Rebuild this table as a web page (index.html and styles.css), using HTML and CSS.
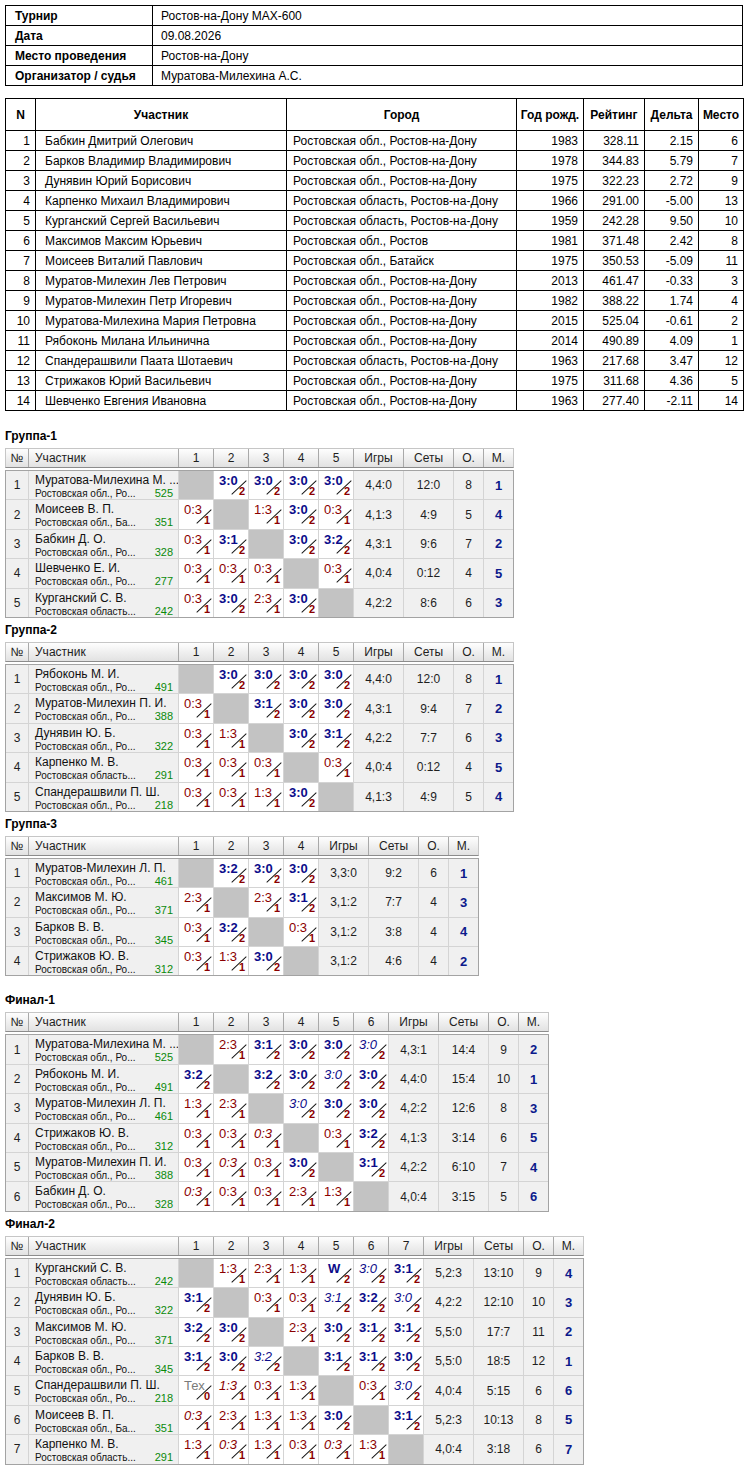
FILE: index.html
```html
<!DOCTYPE html>
<html lang="ru">
<head>
<meta charset="utf-8">
<title>Ростов-на-Дону МАХ-600</title>
<link rel="stylesheet" href="styles.css">
</head>
<body>
<table class="info">
<colgroup><col class="c-lbl"><col></colgroup>
<tr><td class="lbl">Турнир</td><td>Ростов-на-Дону МАХ-600</td></tr>
<tr><td class="lbl">Дата</td><td>09.08.2026</td></tr>
<tr><td class="lbl">Место проведения</td><td>Ростов-на-Дону</td></tr>
<tr><td class="lbl">Организатор / судья</td><td>Муратова-Милехина А.С.</td></tr>
</table>

<table class="plist">
<colgroup><col class="c-n"><col class="c-name"><col class="c-city"><col class="c-year"><col class="c-rate"><col class="c-delta"><col class="c-place"></colgroup>
<thead><tr><th>N</th><th>Участник</th><th>Город</th><th>Год рожд.</th><th>Рейтинг</th><th>Дельта</th><th>Место</th></tr></thead>
<tbody>
<tr><td class="num">1</td><td class="txt">Бабкин Дмитрий Олегович</td><td class="city">Ростовская обл., Ростов-на-Дону</td><td class="num">1983</td><td class="num">328.11</td><td class="num">2.15</td><td class="num">6</td></tr>
<tr><td class="num">2</td><td class="txt">Барков Владимир Владимирович</td><td class="city">Ростовская обл., Ростов-на-Дону</td><td class="num">1978</td><td class="num">344.83</td><td class="num">5.79</td><td class="num">7</td></tr>
<tr><td class="num">3</td><td class="txt">Дунявин Юрий Борисович</td><td class="city">Ростовская обл., Ростов-на-Дону</td><td class="num">1975</td><td class="num">322.23</td><td class="num">2.72</td><td class="num">9</td></tr>
<tr><td class="num">4</td><td class="txt">Карпенко Михаил Владимирович</td><td class="city">Ростовская область, Ростов-на-Дону</td><td class="num">1966</td><td class="num">291.00</td><td class="num">-5.00</td><td class="num">13</td></tr>
<tr><td class="num">5</td><td class="txt">Курганский Сергей Васильевич</td><td class="city">Ростовская область, Ростов-на-Дону</td><td class="num">1959</td><td class="num">242.28</td><td class="num">9.50</td><td class="num">10</td></tr>
<tr><td class="num">6</td><td class="txt">Максимов Максим Юрьевич</td><td class="city">Ростовская обл., Ростов</td><td class="num">1981</td><td class="num">371.48</td><td class="num">2.42</td><td class="num">8</td></tr>
<tr><td class="num">7</td><td class="txt">Моисеев Виталий Павлович</td><td class="city">Ростовская обл., Батайск</td><td class="num">1975</td><td class="num">350.53</td><td class="num">-5.09</td><td class="num">11</td></tr>
<tr><td class="num">8</td><td class="txt">Муратов-Милехин Лев Петрович</td><td class="city">Ростовская обл., Ростов-на-Дону</td><td class="num">2013</td><td class="num">461.47</td><td class="num">-0.33</td><td class="num">3</td></tr>
<tr><td class="num">9</td><td class="txt">Муратов-Милехин Петр Игоревич</td><td class="city">Ростовская обл., Ростов-на-Дону</td><td class="num">1982</td><td class="num">388.22</td><td class="num">1.74</td><td class="num">4</td></tr>
<tr><td class="num">10</td><td class="txt">Муратова-Милехина Мария Петровна</td><td class="city">Ростовская обл., Ростов-на-Дону</td><td class="num">2015</td><td class="num">525.04</td><td class="num">-0.61</td><td class="num">2</td></tr>
<tr><td class="num">11</td><td class="txt">Рябоконь Милана Ильинична</td><td class="city">Ростовская обл., Ростов-на-Дону</td><td class="num">2014</td><td class="num">490.89</td><td class="num">4.09</td><td class="num">1</td></tr>
<tr><td class="num">12</td><td class="txt">Спандерашвили Паата Шотаевич</td><td class="city">Ростовская область, Ростов-на-Дону</td><td class="num">1963</td><td class="num">217.68</td><td class="num">3.47</td><td class="num">12</td></tr>
<tr><td class="num">13</td><td class="txt">Стрижаков Юрий Васильевич</td><td class="city">Ростовская обл., Ростов-на-Дону</td><td class="num">1975</td><td class="num">311.68</td><td class="num">4.36</td><td class="num">5</td></tr>
<tr><td class="num">14</td><td class="txt">Шевченко Евгения Ивановна</td><td class="city">Ростовская обл., Ростов-на-Дону</td><td class="num">1963</td><td class="num">277.40</td><td class="num">-2.11</td><td class="num">14</td></tr>
</tbody>
</table>

<section class="sec first">
<div class="ttl">Группа-1</div>
<div class="hd g5"><div>№</div><div class="hl">Участник</div><div>1</div><div>2</div><div>3</div><div>4</div><div>5</div><div>Игры</div><div>Сеты</div><div>О.</div><div>М.</div></div>
<div class="bd g5">
<div class="no">1</div><div class="pl"><div class="nm">Муратова-Милехина М. ...</div><div class="sub"><span>Ростовская обл., Ро...</span><span class="rt">525</span></div></div>
<div class="x"></div><div class="r w">3:0<b>2</b></div><div class="r w">3:0<b>2</b></div><div class="r w">3:0<b>2</b></div><div class="r w">3:0<b>2</b></div>
<div class="st">4,4:0</div><div class="st">12:0</div><div class="st">8</div><div class="pm">1</div>

<div class="no">2</div><div class="pl"><div class="nm">Моисеев В. П.</div><div class="sub"><span>Ростовская обл., Ба...</span><span class="rt">351</span></div></div>
<div class="r l">0:3<b>1</b></div><div class="x"></div><div class="r l">1:3<b>1</b></div><div class="r w">3:0<b>2</b></div><div class="r l">0:3<b>1</b></div>
<div class="st">4,1:3</div><div class="st">4:9</div><div class="st">5</div><div class="pm">4</div>

<div class="no">3</div><div class="pl"><div class="nm">Бабкин Д. О.</div><div class="sub"><span>Ростовская обл., Ро...</span><span class="rt">328</span></div></div>
<div class="r l">0:3<b>1</b></div><div class="r w">3:1<b>2</b></div><div class="x"></div><div class="r w">3:0<b>2</b></div><div class="r w">3:2<b>2</b></div>
<div class="st">4,3:1</div><div class="st">9:6</div><div class="st">7</div><div class="pm">2</div>

<div class="no">4</div><div class="pl"><div class="nm">Шевченко Е. И.</div><div class="sub"><span>Ростовская обл., Ро...</span><span class="rt">277</span></div></div>
<div class="r l">0:3<b>1</b></div><div class="r l">0:3<b>1</b></div><div class="r l">0:3<b>1</b></div><div class="x"></div><div class="r l">0:3<b>1</b></div>
<div class="st">4,0:4</div><div class="st">0:12</div><div class="st">4</div><div class="pm">5</div>

<div class="no">5</div><div class="pl"><div class="nm">Курганский С. В.</div><div class="sub"><span>Ростовская область...</span><span class="rt">242</span></div></div>
<div class="r l">0:3<b>1</b></div><div class="r w">3:0<b>2</b></div><div class="r l">2:3<b>1</b></div><div class="r w">3:0<b>2</b></div><div class="x"></div>
<div class="st">4,2:2</div><div class="st">8:6</div><div class="st">6</div><div class="pm">3</div>
</div>
</section>

<section class="sec">
<div class="ttl">Группа-2</div>
<div class="hd g5"><div>№</div><div class="hl">Участник</div><div>1</div><div>2</div><div>3</div><div>4</div><div>5</div><div>Игры</div><div>Сеты</div><div>О.</div><div>М.</div></div>
<div class="bd g5">
<div class="no">1</div><div class="pl"><div class="nm">Рябоконь М. И.</div><div class="sub"><span>Ростовская обл., Ро...</span><span class="rt">491</span></div></div>
<div class="x"></div><div class="r w">3:0<b>2</b></div><div class="r w">3:0<b>2</b></div><div class="r w">3:0<b>2</b></div><div class="r w">3:0<b>2</b></div>
<div class="st">4,4:0</div><div class="st">12:0</div><div class="st">8</div><div class="pm">1</div>

<div class="no">2</div><div class="pl"><div class="nm">Муратов-Милехин П. И.</div><div class="sub"><span>Ростовская обл., Ро...</span><span class="rt">388</span></div></div>
<div class="r l">0:3<b>1</b></div><div class="x"></div><div class="r w">3:1<b>2</b></div><div class="r w">3:0<b>2</b></div><div class="r w">3:0<b>2</b></div>
<div class="st">4,3:1</div><div class="st">9:4</div><div class="st">7</div><div class="pm">2</div>

<div class="no">3</div><div class="pl"><div class="nm">Дунявин Ю. Б.</div><div class="sub"><span>Ростовская обл., Ро...</span><span class="rt">322</span></div></div>
<div class="r l">0:3<b>1</b></div><div class="r l">1:3<b>1</b></div><div class="x"></div><div class="r w">3:0<b>2</b></div><div class="r w">3:1<b>2</b></div>
<div class="st">4,2:2</div><div class="st">7:7</div><div class="st">6</div><div class="pm">3</div>

<div class="no">4</div><div class="pl"><div class="nm">Карпенко М. В.</div><div class="sub"><span>Ростовская область...</span><span class="rt">291</span></div></div>
<div class="r l">0:3<b>1</b></div><div class="r l">0:3<b>1</b></div><div class="r l">0:3<b>1</b></div><div class="x"></div><div class="r l">0:3<b>1</b></div>
<div class="st">4,0:4</div><div class="st">0:12</div><div class="st">4</div><div class="pm">5</div>

<div class="no">5</div><div class="pl"><div class="nm">Спандерашвили П. Ш.</div><div class="sub"><span>Ростовская обл., Ро...</span><span class="rt">218</span></div></div>
<div class="r l">0:3<b>1</b></div><div class="r l">0:3<b>1</b></div><div class="r l">1:3<b>1</b></div><div class="r w">3:0<b>2</b></div><div class="x"></div>
<div class="st">4,1:3</div><div class="st">4:9</div><div class="st">5</div><div class="pm">4</div>
</div>
</section>

<section class="sec">
<div class="ttl">Группа-3</div>
<div class="hd g4"><div>№</div><div class="hl">Участник</div><div>1</div><div>2</div><div>3</div><div>4</div><div>Игры</div><div>Сеты</div><div>О.</div><div>М.</div></div>
<div class="bd g4">
<div class="no">1</div><div class="pl"><div class="nm">Муратов-Милехин Л. П.</div><div class="sub"><span>Ростовская обл., Ро...</span><span class="rt">461</span></div></div>
<div class="x"></div><div class="r w">3:2<b>2</b></div><div class="r w">3:0<b>2</b></div><div class="r w">3:0<b>2</b></div>
<div class="st">3,3:0</div><div class="st">9:2</div><div class="st">6</div><div class="pm">1</div>

<div class="no">2</div><div class="pl"><div class="nm">Максимов М. Ю.</div><div class="sub"><span>Ростовская обл., Ро...</span><span class="rt">371</span></div></div>
<div class="r l">2:3<b>1</b></div><div class="x"></div><div class="r l">2:3<b>1</b></div><div class="r w">3:1<b>2</b></div>
<div class="st">3,1:2</div><div class="st">7:7</div><div class="st">4</div><div class="pm">3</div>

<div class="no">3</div><div class="pl"><div class="nm">Барков В. В.</div><div class="sub"><span>Ростовская обл., Ро...</span><span class="rt">345</span></div></div>
<div class="r l">0:3<b>1</b></div><div class="r w">3:2<b>2</b></div><div class="x"></div><div class="r l">0:3<b>1</b></div>
<div class="st">3,1:2</div><div class="st">3:8</div><div class="st">4</div><div class="pm">4</div>

<div class="no">4</div><div class="pl"><div class="nm">Стрижаков Ю. В.</div><div class="sub"><span>Ростовская обл., Ро...</span><span class="rt">312</span></div></div>
<div class="r l">0:3<b>1</b></div><div class="r l">1:3<b>1</b></div><div class="r w">3:0<b>2</b></div><div class="x"></div>
<div class="st">3,1:2</div><div class="st">4:6</div><div class="st">4</div><div class="pm">2</div>
</div>
</section>

<section class="sec final">
<div class="ttl">Финал-1</div>
<div class="hd g6"><div>№</div><div class="hl">Участник</div><div>1</div><div>2</div><div>3</div><div>4</div><div>5</div><div>6</div><div>Игры</div><div>Сеты</div><div>О.</div><div>М.</div></div>
<div class="bd g6">
<div class="no">1</div><div class="pl"><div class="nm">Муратова-Милехина М. ...</div><div class="sub"><span>Ростовская обл., Ро...</span><span class="rt">525</span></div></div>
<div class="x"></div><div class="r l">2:3<b>1</b></div><div class="r w">3:1<b>2</b></div><div class="r w">3:0<b>2</b></div><div class="r w">3:0<b>2</b></div><div class="r w i">3:0<b>2</b></div>
<div class="st">4,3:1</div><div class="st">14:4</div><div class="st">9</div><div class="pm">2</div>

<div class="no">2</div><div class="pl"><div class="nm">Рябоконь М. И.</div><div class="sub"><span>Ростовская обл., Ро...</span><span class="rt">491</span></div></div>
<div class="r w">3:2<b>2</b></div><div class="x"></div><div class="r w">3:2<b>2</b></div><div class="r w">3:0<b>2</b></div><div class="r w i">3:0<b>2</b></div><div class="r w">3:0<b>2</b></div>
<div class="st">4,4:0</div><div class="st">15:4</div><div class="st">10</div><div class="pm">1</div>

<div class="no">3</div><div class="pl"><div class="nm">Муратов-Милехин Л. П.</div><div class="sub"><span>Ростовская обл., Ро...</span><span class="rt">461</span></div></div>
<div class="r l">1:3<b>1</b></div><div class="r l">2:3<b>1</b></div><div class="x"></div><div class="r w i">3:0<b>2</b></div><div class="r w">3:0<b>2</b></div><div class="r w">3:0<b>2</b></div>
<div class="st">4,2:2</div><div class="st">12:6</div><div class="st">8</div><div class="pm">3</div>

<div class="no">4</div><div class="pl"><div class="nm">Стрижаков Ю. В.</div><div class="sub"><span>Ростовская обл., Ро...</span><span class="rt">312</span></div></div>
<div class="r l">0:3<b>1</b></div><div class="r l">0:3<b>1</b></div><div class="r l i">0:3<b>1</b></div><div class="x"></div><div class="r l">0:3<b>1</b></div><div class="r w">3:2<b>2</b></div>
<div class="st">4,1:3</div><div class="st">3:14</div><div class="st">6</div><div class="pm">5</div>

<div class="no">5</div><div class="pl"><div class="nm">Муратов-Милехин П. И.</div><div class="sub"><span>Ростовская обл., Ро...</span><span class="rt">388</span></div></div>
<div class="r l">0:3<b>1</b></div><div class="r l i">0:3<b>1</b></div><div class="r l">0:3<b>1</b></div><div class="r w">3:0<b>2</b></div><div class="x"></div><div class="r w">3:1<b>2</b></div>
<div class="st">4,2:2</div><div class="st">6:10</div><div class="st">7</div><div class="pm">4</div>

<div class="no">6</div><div class="pl"><div class="nm">Бабкин Д. О.</div><div class="sub"><span>Ростовская обл., Ро...</span><span class="rt">328</span></div></div>
<div class="r l i">0:3<b>1</b></div><div class="r l">0:3<b>1</b></div><div class="r l">0:3<b>1</b></div><div class="r l">2:3<b>1</b></div><div class="r l">1:3<b>1</b></div><div class="x"></div>
<div class="st">4,0:4</div><div class="st">3:15</div><div class="st">5</div><div class="pm">6</div>
</div>
</section>

<section class="sec">
<div class="ttl">Финал-2</div>
<div class="hd g7"><div>№</div><div class="hl">Участник</div><div>1</div><div>2</div><div>3</div><div>4</div><div>5</div><div>6</div><div>7</div><div>Игры</div><div>Сеты</div><div>О.</div><div>М.</div></div>
<div class="bd g7">
<div class="no">1</div><div class="pl"><div class="nm">Курганский С. В.</div><div class="sub"><span>Ростовская область...</span><span class="rt">242</span></div></div>
<div class="x"></div><div class="r l">1:3<b>1</b></div><div class="r l">2:3<b>1</b></div><div class="r l">1:3<b>1</b></div><div class="r w wo">W<b>2</b></div><div class="r w i">3:0<b>2</b></div><div class="r w">3:1<b>2</b></div>
<div class="st">5,2:3</div><div class="st">13:10</div><div class="st">9</div><div class="pm">4</div>

<div class="no">2</div><div class="pl"><div class="nm">Дунявин Ю. Б.</div><div class="sub"><span>Ростовская обл., Ро...</span><span class="rt">322</span></div></div>
<div class="r w">3:1<b>2</b></div><div class="x"></div><div class="r l">0:3<b>1</b></div><div class="r l">0:3<b>1</b></div><div class="r w i">3:1<b>2</b></div><div class="r w">3:2<b>2</b></div><div class="r w i">3:0<b>2</b></div>
<div class="st">4,2:2</div><div class="st">12:10</div><div class="st">10</div><div class="pm">3</div>

<div class="no">3</div><div class="pl"><div class="nm">Максимов М. Ю.</div><div class="sub"><span>Ростовская обл., Ро...</span><span class="rt">371</span></div></div>
<div class="r w">3:2<b>2</b></div><div class="r w">3:0<b>2</b></div><div class="x"></div><div class="r l">2:3<b>1</b></div><div class="r w">3:0<b>2</b></div><div class="r w">3:1<b>2</b></div><div class="r w">3:1<b>2</b></div>
<div class="st">5,5:0</div><div class="st">17:7</div><div class="st">11</div><div class="pm">2</div>

<div class="no">4</div><div class="pl"><div class="nm">Барков В. В.</div><div class="sub"><span>Ростовская обл., Ро...</span><span class="rt">345</span></div></div>
<div class="r w">3:1<b>2</b></div><div class="r w">3:0<b>2</b></div><div class="r w i">3:2<b>2</b></div><div class="x"></div><div class="r w">3:1<b>2</b></div><div class="r w">3:1<b>2</b></div><div class="r w">3:0<b>2</b></div>
<div class="st">5,5:0</div><div class="st">18:5</div><div class="st">12</div><div class="pm">1</div>

<div class="no">5</div><div class="pl"><div class="nm">Спандерашвили П. Ш.</div><div class="sub"><span>Ростовская обл., Ро...</span><span class="rt">218</span></div></div>
<div class="r t">Тех<b>0</b></div><div class="r l i">1:3<b>1</b></div><div class="r l">0:3<b>1</b></div><div class="r l">1:3<b>1</b></div><div class="x"></div><div class="r l">0:3<b>1</b></div><div class="r w i">3:0<b>2</b></div>
<div class="st">4,0:4</div><div class="st">5:15</div><div class="st">6</div><div class="pm">6</div>

<div class="no">6</div><div class="pl"><div class="nm">Моисеев В. П.</div><div class="sub"><span>Ростовская обл., Ба...</span><span class="rt">351</span></div></div>
<div class="r l i">0:3<b>1</b></div><div class="r l">2:3<b>1</b></div><div class="r l">1:3<b>1</b></div><div class="r l">1:3<b>1</b></div><div class="r w">3:0<b>2</b></div><div class="x"></div><div class="r w">3:1<b>2</b></div>
<div class="st">5,2:3</div><div class="st">10:13</div><div class="st">8</div><div class="pm">5</div>

<div class="no">7</div><div class="pl"><div class="nm">Карпенко М. В.</div><div class="sub"><span>Ростовская область...</span><span class="rt">291</span></div></div>
<div class="r l">1:3<b>1</b></div><div class="r l i">0:3<b>1</b></div><div class="r l">1:3<b>1</b></div><div class="r l">0:3<b>1</b></div><div class="r l i">0:3<b>1</b></div><div class="r l">1:3<b>1</b></div><div class="x"></div>
<div class="st">4,0:4</div><div class="st">3:18</div><div class="st">6</div><div class="pm">7</div>
</div>
</section>
</body>
</html>
```
FILE: styles.css
```css
html, body { margin: 0; padding: 0; }
body {
  padding: 5px 0 0 5px;
  font-family: "Liberation Sans", Arial, sans-serif;
  font-size: 12px;
  color: #000;
  background: #fff;
}

/* ---------- info table ---------- */
.info {
  border-collapse: collapse;
  table-layout: fixed;
  width: 738px;
}
.info .c-lbl { width: 147px; }
.info td {
  border: 1px solid #000;
  height: 19px;
  padding: 0 0 0 8px;
  line-height: 14px;
  white-space: nowrap;
}
.info td.lbl { font-weight: bold; padding-left: 9px; }

/* ---------- participants ---------- */
.plist {
  margin-top: 12px;
  border-collapse: collapse;
  table-layout: fixed;
  width: 738px;
}
.plist .c-n { width: 30px; }
.plist .c-name { width: 251px; }
.plist .c-city { width: 230px; }
.plist .c-year { width: 67px; }
.plist .c-rate { width: 61px; }
.plist .c-delta { width: 54px; }
.plist .c-place { width: 45px; }
.plist th, .plist td {
  border: 1px solid #000;
  padding: 0;
  line-height: 14px;
  white-space: nowrap;
  overflow: hidden;
}
.plist th { height: 31px; font-weight: bold; text-align: center; }
.plist td { height: 19px; }
.plist td.num { text-align: right; padding-right: 5px; }
.plist td.txt { padding-left: 9px; }
.plist td.city { padding-left: 6px; }

/* ---------- group tables ---------- */
.sec { margin-top: 5px; }
.sec.first { margin-top: 18px; }
.sec.final { margin-top: 17px; }
.ttl {
  font-weight: bold;
  font-size: 12px;
  line-height: 14px;
  height: 14px;
  margin-bottom: 5px;
}

.g4 { grid-template-columns: 22px 149px repeat(4, 34px) 49px 49px 29px 29px; }
.g5 { grid-template-columns: 22px 149px repeat(5, 34px) 49px 49px 29px 29px; }
.g6 { grid-template-columns: 22px 149px repeat(6, 34px) 49px 49px 29px 29px; }
.g7 { grid-template-columns: 22px 149px repeat(7, 34px) 49px 49px 29px 29px; }

.hd {
  display: grid;
  width: max-content;
  grid-template-rows: 18px;
  column-gap: 1px;
  border: 1px solid #c6c6c6;
  border-bottom-color: #8c8c8c;
  background: #a9a9a9;
}
.hd > div {
  background: linear-gradient(#fefefe, #f1f1f1 45%, #e2e2e2);
  text-align: center;
  line-height: 18px;
  color: #1e1e1e;
  white-space: nowrap;
}
.hd > div.hl { text-align: left; padding-left: 6px; }

.bd {
  display: grid;
  width: max-content;
  margin-top: 2px;
  grid-auto-rows: 28.4px;
  gap: 1px;
  border: 1px solid #a3a3a3;
  background: #d4d4d4;
}
.bd > div { background: #f0f0f0; }

.no {
  display: flex;
  align-items: center;
  justify-content: center;
  color: #1e1e1e;
}
.pl {
  padding: 2px 5px 0 6px;
  overflow: hidden;
}
.nm {
  font-size: 12px;
  line-height: 14px;
  white-space: nowrap;
  color: #111;
}
.sub {
  display: flex;
  justify-content: space-between;
  align-items: baseline;
  font-size: 10px;
  line-height: 12px;
  white-space: nowrap;
  color: #111;
}
.rt { color: #0a8a0a; font-size: 11px; }

.st, .pm {
  display: flex;
  align-items: center;
  justify-content: center;
  color: #1e1e1e;
}
.pm { font-weight: bold; font-size: 13px; color: #0c1a8c; }

.bd > .x { background: #c3c3c3; }

.bd > .r {
  position: relative;
  background: #fff;
  padding: 2px 0 0 5px;
  font-size: 13px;
  line-height: 15px;
  white-space: nowrap;
}
.r::after {
  content: "";
  position: absolute;
  left: 14.5px;
  top: 16px;
  width: 20px;
  height: 1px;
  background: #111;
  transform: rotate(-43deg);
}
.r b {
  position: absolute;
  right: 3px;
  top: 15px;
  font-size: 11px;
  line-height: 11px;
  font-weight: bold;
  font-style: normal;
  color: #8a0000;
}
.r.w { color: #0c0c8a; font-weight: bold; }
.r.l { color: #8a0000; font-weight: normal; }
.r.i { font-weight: normal; font-style: italic; }
.r.t { color: #7a7a7a; }
.r.wo { padding-left: 9px; }
```
